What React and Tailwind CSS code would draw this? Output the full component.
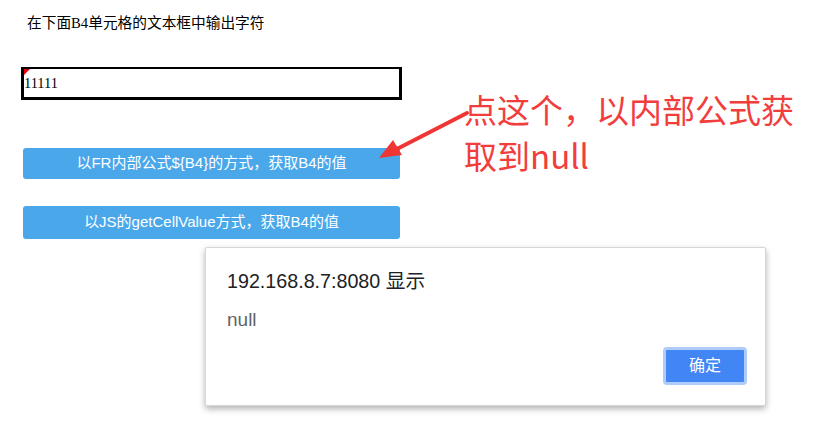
import React from 'react';

const cjk = { fontFamily: '"Liberation Sans", "Noto Sans CJK SC", sans-serif' };

const App = () => {
  return (
    <div className="relative w-[817px] h-[448px] bg-white overflow-hidden" style={cjk}>
      {/* Report form */}
      <div className="flex flex-col pl-[21px] pt-[12px]">
        <p
          className="pl-[6px] text-[14.7px] leading-[22px] text-black"
          style={{ fontFamily: '"Liberation Serif", "Noto Sans CJK SC", serif' }}
        >
          在下面B4单元格的文本框中输出字符
        </p>

        <div className="relative mt-[33px] w-[381px] h-[33px] border-black border-t-2 border-l-[3px] border-r-[3px] border-b-[3px] flex items-center">
          <span className="absolute left-0 top-0 w-0 h-0 border-t-[6px] border-r-[6px] border-t-red-600 border-r-transparent" />
          <span className="pt-[2px] text-[14.4px] text-black" style={{ fontFamily: '"Liberation Serif", serif' }}>11111</span>
        </div>

        <button className="mt-[48px] ml-[2px] w-[377px] h-[31px] rounded-[3px] bg-[#4aa8ea] text-white text-[15px] flex items-center justify-center">
          以FR内部公式${'{'}B4{'}'}的方式，获取B4的值
        </button>

        <button className="mt-[27px] ml-[2px] w-[377px] h-[33px] rounded-[3px] bg-[#4aa8ea] text-white text-[15px] flex items-center justify-center">
          以JS的getCellValue方式，获取B4的值
        </button>
      </div>

      {/* Annotation */}
      <div
        className="absolute left-[464px] top-[86px] text-[33px] leading-[46px] text-[#f23d3d]"
        style={{ fontFamily: '"Noto Sans CJK SC", sans-serif' }}
      >
        <div>点这个，以内部公式获</div>
        <div>取到null</div>
      </div>
      <svg className="absolute left-0 top-0" width="817" height="448">
        <line x1="467" y1="113" x2="395" y2="150" stroke="#f03535" strokeWidth="4" strokeLinecap="round" />
        <polygon points="379,158 393,140 402,155" fill="#f03535" />
      </svg>

      {/* Alert dialog */}
      <div className="absolute left-[205px] top-[247px] w-[561px] h-[159px] bg-white rounded-[2px] border border-[#d6d6d6] shadow-[0_3px_6px_rgba(0,0,0,0.3)] flex flex-col">
        <div className="pl-[21px] pt-[20px] text-[19.7px] leading-[26px] text-[#202124]">192.168.8.7:8080 显示</div>
        <div className="pl-[21px] pt-[13px] text-[19px] leading-[26px] text-[#5f6368]">null</div>
        <div className="flex justify-end pr-[18px] mt-[14px]">
          <div className="w-[84px] h-[38px] rounded-[4px] border-[3px] border-[#aecbfa] bg-[#4285f4] text-white text-[16px] flex items-center justify-center">
            确定
          </div>
        </div>
      </div>
    </div>
  );
};

export default App;
